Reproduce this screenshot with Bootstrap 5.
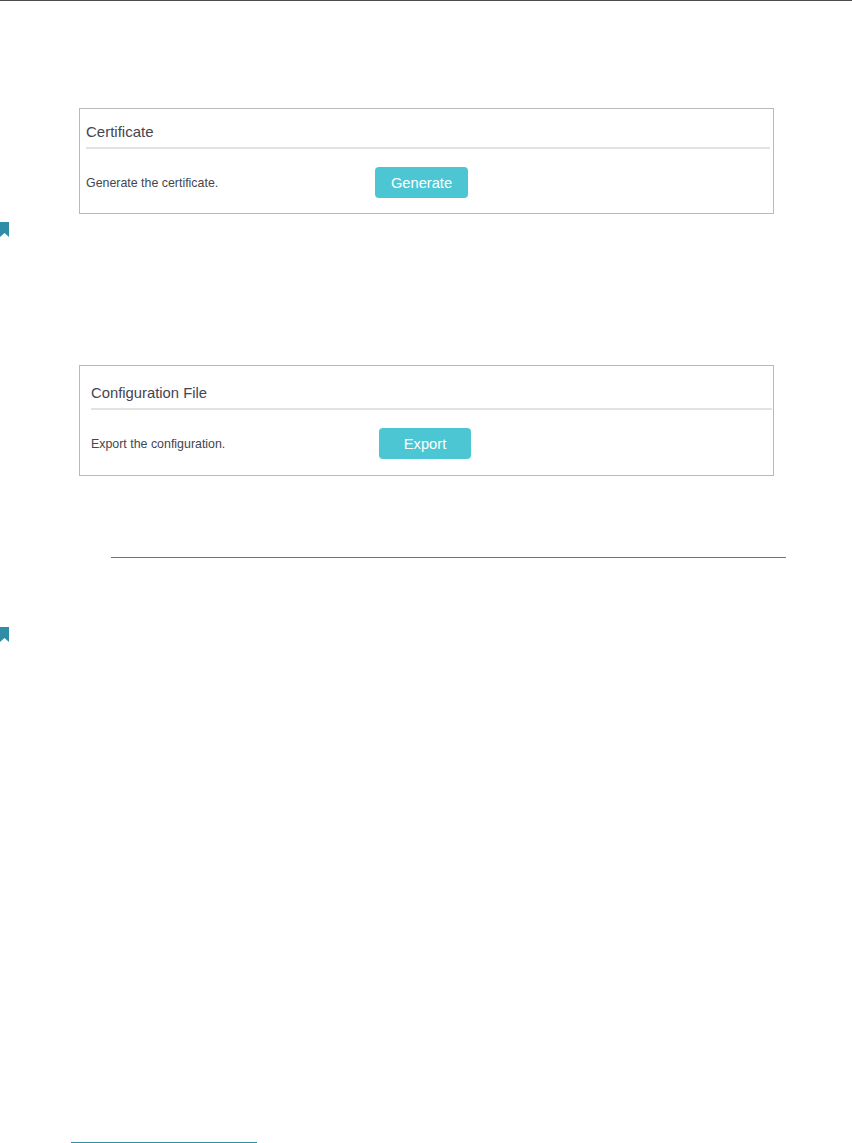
<!DOCTYPE html>
<html lang="en">
<head>
  <meta charset="UTF-8">
  <meta name="viewport" content="width=device-width, initial-scale=1.0">
  <title>Backup</title>
  <link href="https://cdn.jsdelivr.net/npm/bootstrap@5.3.1/dist/css/bootstrap.min.css" rel="stylesheet">
  <style>
    html, body {
      height: 1143px;
      overflow: hidden;
    }
    body {
      background: #fff;
      font-family: "Liberation Sans", Arial, sans-serif;
      color: #45454f;
    }
    .top-rule {
      height: 1px;
      background: #4a4a4a;
    }
    .ui-panel {
      width: 695px;
      margin-left: 79px;
      border: 1px solid #b9b9b9;
    }
    .panel-cert {
      margin-top: 107px;
      height: 106px;
      padding: 14px 3px 0 6px;
    }
    .panel-conf {
      margin-top: 128px;
      height: 111px;
      padding: 18px 1px 0 11px;
    }
    .panel-title {
      font-size: 15px;
      line-height: 18px;
      padding-bottom: 6px;
      border-bottom: 2px solid #e2e2e2;
    }
    .panel-conf .panel-title {
      font-size: 14.8px;
    }
    .panel-row {
      display: flex;
      align-items: center;
      margin-top: 18px;
      font-size: 12.4px;
    }
    .row-label {
      width: 289px;
      padding-top: 2px;
    }
    .panel-conf .row-label {
      width: 288px;
    }
    .btn.btn-teal {
      width: 93px;
      height: 31px;
      padding: 1px 0 0;
      background: #4dc6d4;
      border: 0;
      border-radius: 4px;
      color: #fff;
      font-size: 14.7px;
      line-height: 30px;
    }
    .panel-conf .btn.btn-teal {
      width: 92px;
    }
    .bookmark {
      display: block;
      width: 9px;
      height: 15px;
    }
    .bookmark-a {
      margin-top: 8px;
    }
    .bookmark-b {
      margin-top: 69px;
    }
    .teal-rule {
      height: 1px;
      background: #2b8ca3;
    }
    .rule-note {
      width: 675px;
      margin: 81px 0 0 111px;
    }
    .rule-foot {
      width: 186px;
      margin: 500px 0 0 71px;
    }
  </style>
</head>
<body>
  <div class="top-rule"></div>

  <section class="ui-panel panel-cert">
    <div class="panel-title">Certificate</div>
    <div class="panel-row">
      <span class="row-label">Generate the certificate.</span>
      <button type="button" class="btn btn-teal">Generate</button>
    </div>
  </section>

  <svg class="bookmark bookmark-a" viewBox="0 0 9 15"><path d="M0 0H9V15L4.5 11L0 15Z" fill="#2f8ea6"/></svg>

  <section class="ui-panel panel-conf">
    <div class="panel-title">Configuration File</div>
    <div class="panel-row">
      <span class="row-label">Export the configuration.</span>
      <button type="button" class="btn btn-teal">Export</button>
    </div>
  </section>

  <div class="teal-rule rule-note"></div>

  <svg class="bookmark bookmark-b" viewBox="0 0 9 15"><path d="M0 0H9V15L4.5 11L0 15Z" fill="#2f8ea6"/></svg>

  <div class="teal-rule rule-foot"></div>

  <script src="https://cdn.jsdelivr.net/npm/bootstrap@5.3.1/dist/js/bootstrap.bundle.min.js"></script>
</body>
</html>
